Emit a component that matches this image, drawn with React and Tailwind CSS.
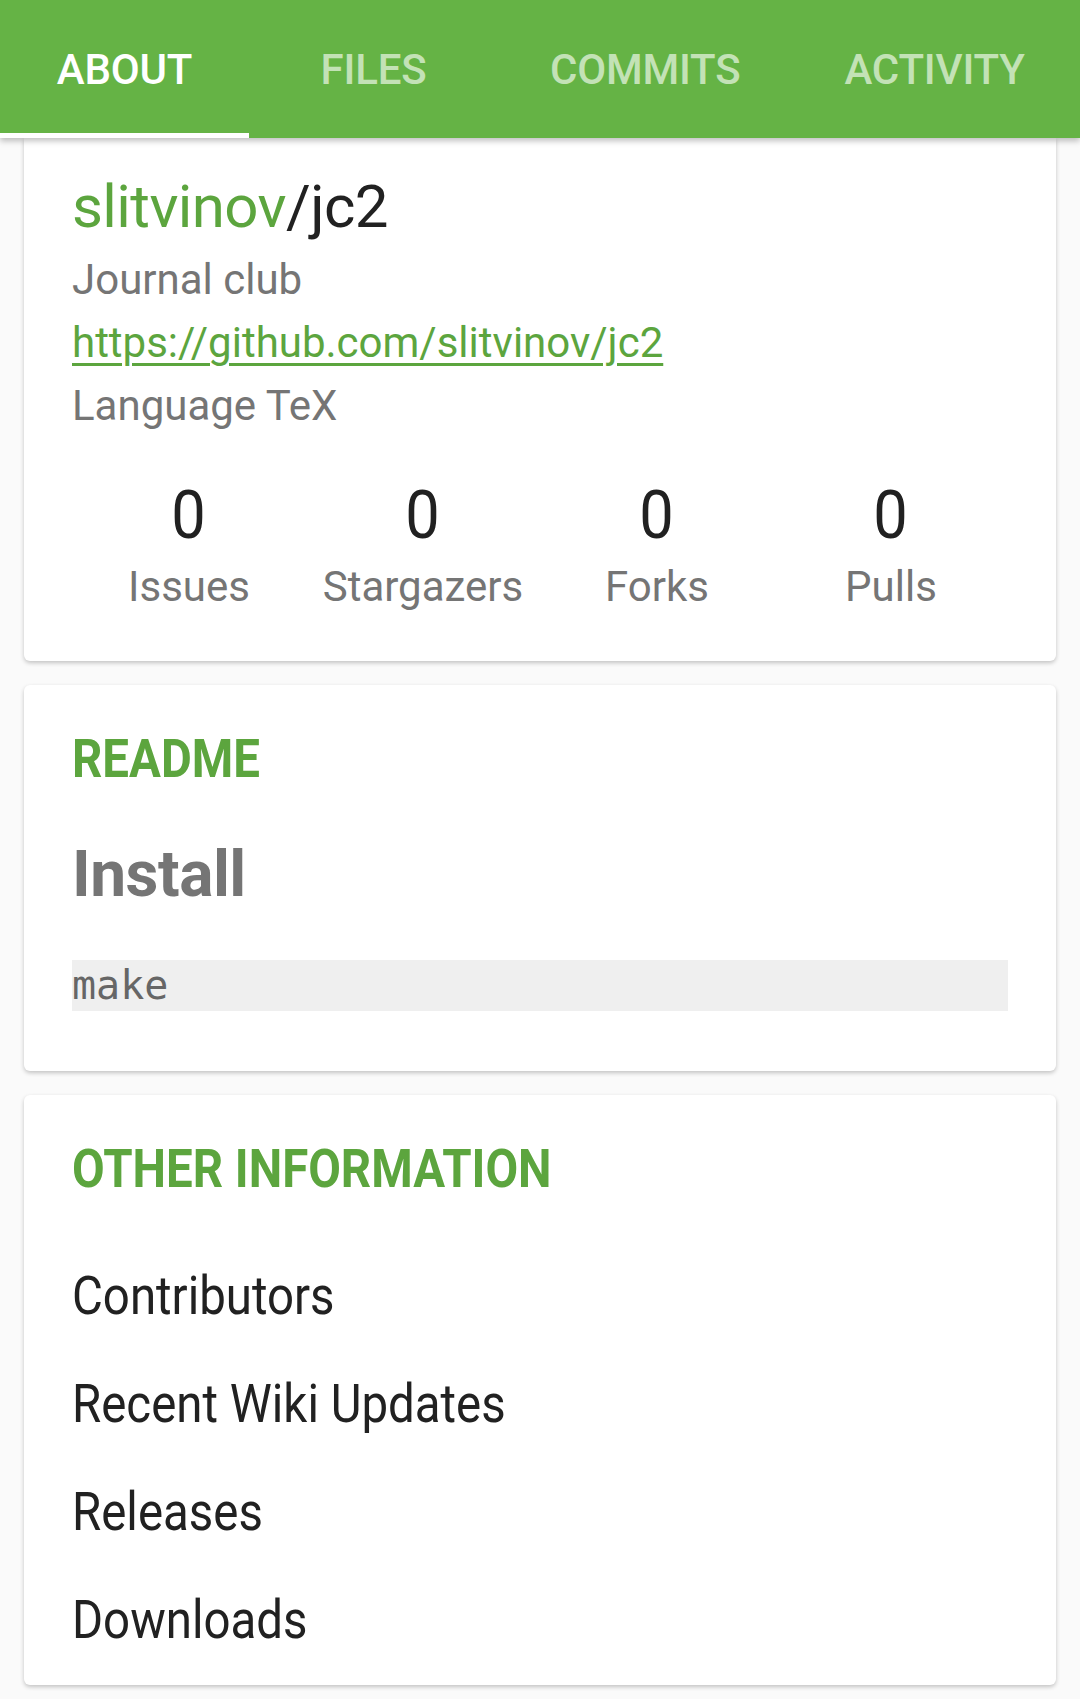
import React from "react";

const tabs = ["About", "Files", "Commits", "Activity"];
const stats = [
  { label: "Issues", value: 0 },
  { label: "Stargazers", value: 0 },
  { label: "Forks", value: 0 },
  { label: "Pulls", value: 0 },
];
const links = ["Contributors", "Recent Wiki Updates", "Releases", "Downloads"];

export default function App() {
  return (
    <div className="min-h-[1699px] bg-[#fafafa] font-['Roboto',sans-serif]">
      {/* Tab bar */}
      <div className="relative z-10 flex h-[138px] overflow-hidden bg-[#65b345] shadow-[0_3px_6px_rgba(0,0,0,0.25)]">
        {tabs.map((t, i) => (
          <div
            key={t}
            className={`relative flex min-w-[249px] shrink-0 items-center justify-center px-[52px] text-[42px] font-medium uppercase tracking-[-0.2px] ${
              i === 0 ? "text-white" : "text-[#c3e2b6]"
            }`}
          >
            {t}
            {i === 0 && <div className="absolute bottom-0 left-0 right-0 h-[5px] bg-white" />}
          </div>
        ))}
      </div>

      <div className="flex flex-col gap-[24px] px-[24px] pb-[24px]">
        {/* Repo card */}
        <div className="rounded-b-[6px] bg-white px-[48px] pt-[33px] pb-[43px] shadow-[0_2px_4px_rgba(0,0,0,0.22)]">
          <h1 className="text-[60px] leading-[72px] tracking-[-0.6px] text-[#212121]">
            <span className="text-[#5ca53e]">slitvinov</span>/jc2
          </h1>
          <div className="mt-[5px] text-[42px] leading-[63px] text-[#757575]">
            <p>Journal club</p>
            <a href="#" className="text-[#5ca53e] underline decoration-[3px] underline-offset-[6px]">
              https://github.com/slitvinov/jc2
            </a>
            <p>Language TeX</p>
          </div>
          <div className="mt-[39px] grid grid-cols-4">
            {stats.map((s) => (
              <div key={s.label} className="flex flex-col items-center">
                <span className="inline-block scale-x-[0.93] text-[66px] leading-[79px] text-[#212121]">{s.value}</span>
                <span className="text-[42px] leading-[63px] text-[#757575]">{s.label}</span>
              </div>
            ))}
          </div>
        </div>

        {/* Readme card */}
        <div className="rounded-[6px] bg-white px-[48px] pt-[41px] pb-[60px] shadow-[0_2px_4px_rgba(0,0,0,0.22)]">
          <h2 className="origin-left scale-x-[0.878] text-[54px] font-bold leading-[65px] text-[#5ca53e]">README</h2>
          <h3 className="mt-[45px] text-[64px] font-bold leading-[77px] tracking-[-0.5px] text-[#757575]">Install</h3>
          <pre className="mt-[47px] h-[51px] bg-[#efefef] font-['DejaVu_Sans_Mono',monospace] text-[40px] leading-[51px] text-[#666]">
            make
          </pre>
        </div>

        {/* Other info card */}
        <div className="rounded-[6px] bg-white px-[48px] pt-[41px] pb-[11px] shadow-[0_2px_4px_rgba(0,0,0,0.22)]">
          <h2 className="origin-left scale-x-[0.878] text-[54px] font-bold leading-[65px] text-[#5ca53e]">
            OTHER INFORMATION
          </h2>
          <ul className="mt-[41px]">
            {links.map((l) => (
              <li key={l} className="origin-left scale-x-[0.878] text-[54px] leading-[108px] text-[#212121]">
                {l}
              </li>
            ))}
          </ul>
        </div>
      </div>
    </div>
  );
}
